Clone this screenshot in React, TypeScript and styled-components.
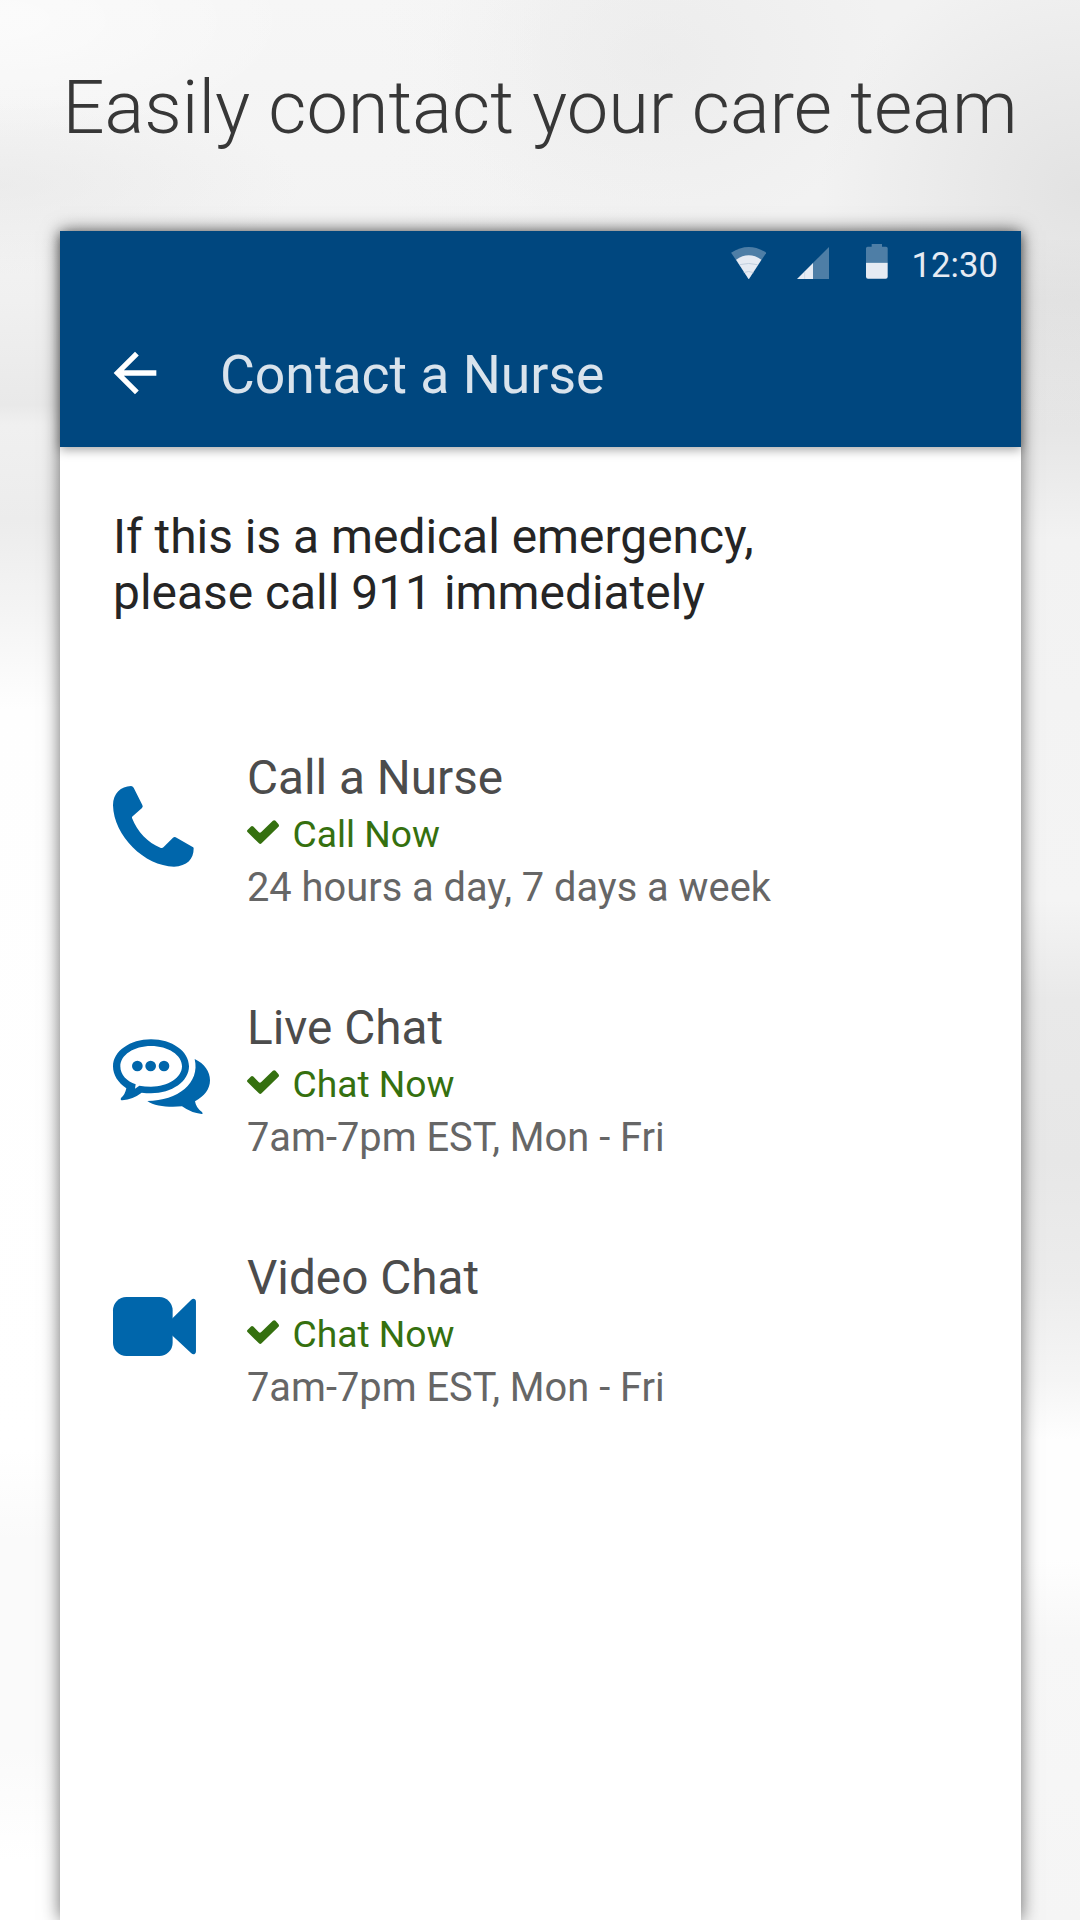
import React from "react";
import styled, { createGlobalStyle } from "styled-components";

const GlobalStyle = createGlobalStyle`
  html, body {
    margin: 0;
    background: #fff;
  }
  *, *::before, *::after {
    box-sizing: border-box;
  }
`;

const Page = styled.main`
  display: flex;
  flex-direction: column;
  align-items: center;
  width: 1080px;
  height: 1920px;
  overflow: hidden;
  font-family: Roboto, "Liberation Sans", sans-serif;
  background:
    radial-gradient(ellipse 260px 240px at 1080px 190px, rgba(205, 205, 205, 0.42), transparent),
    radial-gradient(ellipse 230px 180px at 660px 60px, rgba(226, 226, 226, 0.35), transparent),
    radial-gradient(ellipse 300px 90px at 0 185px, rgba(224, 224, 224, 0.4), transparent),
    radial-gradient(ellipse 300px 120px at 0 20px, rgba(255, 255, 255, 0.6), transparent),
    linear-gradient(90deg, transparent 35%, #f2f2f2 65%) 0 0 / 100% 240px no-repeat,
    linear-gradient(#f6f6f6 0, #f3f3f3 230px, #f0f0f0 300px, #e9e9e9 405px, #f0f0f0 425px, #ececec 520px, #f5f5f5 620px, #fefefe 710px, #fff 1450px, #fafafa 1540px, #fafafa 1750px, #fff 1860px) 0 0 / 540px 100% no-repeat,
    linear-gradient(#f4f4f4 0, #f2f2f2 230px, #e8e8e8 300px, #e6e6e6 430px, #f2f2f2 540px, #f3f3f3 700px, #f4f4f4 900px, #e9e9e9 1000px, #e7e7e7 1160px, #ececec 1280px, #f5f5f5 1380px, #fefefe 1440px, #fefefe 1560px, #f7f7f7 1640px, #f5f5f5 1920px) 540px 0 / 540px 100% no-repeat;
`;

const Headline = styled.h1`
  flex: none;
  height: 231px;
  margin: 0;
  padding-top: 68px;
  font-size: 74px;
  font-weight: 300;
  line-height: 80px;
  white-space: nowrap;
  color: #373737;
`;

const Phone = styled.section`
  flex: 1;
  width: 961px;
  margin-left: 1px;
  background: #fff;
  box-shadow: 0 0 17px rgba(0, 0, 0, 0.58);
`;

const AppBar = styled.header`
  height: 216px;
  background: #00477f;
  box-shadow: 0 3px 10px rgba(0, 0, 0, 0.35);
`;

const StatusBar = styled.div`
  display: flex;
  justify-content: flex-end;
  align-items: flex-end;
  height: 78px;
  padding: 0 23px 30px 0;
  color: #e6ebf3;
`;

const StatusIcon = styled.svg<{ $gap: number }>`
  display: block;
  margin-right: ${(p) => p.$gap}px;
  fill: currentColor;
`;

const Clock = styled.time`
  font-size: 34.7px;
  line-height: 28px;
`;

const Toolbar = styled.div`
  display: flex;
  align-items: center;
  gap: 53px;
  height: 138px;
  padding: 0 43px 11px;
`;

const BackButton = styled.button`
  display: flex;
  padding: 0;
  border: 0;
  background: none;
  color: #fff;
`;

const ScreenTitle = styled.h2`
  margin: 0;
  padding-top: 4px;
  font-size: 53.5px;
  font-weight: 400;
  line-height: 64px;
  color: #d9e3ec;
`;

const Content = styled.div`
  padding: 62px 53px 0;
`;

const Notice = styled.p`
  margin: 0 0 129px;
  font-size: 47.9px;
  line-height: 56px;
  color: #252525;
`;

const Options = styled.ul`
  display: flex;
  flex-direction: column;
  gap: 88px;
  margin: 0;
  padding: 0;
  list-style: none;
`;

const Option = styled.li`
  display: flex;
  height: 162px;
`;

const OptionIcon = styled.div`
  display: flex;
  align-items: center;
  flex: none;
  width: 134px;
  padding-bottom: 9px;
  color: #0066ab;

  svg {
    display: block;
    fill: currentColor;
    overflow: visible;
  }
`;

const OptionName = styled.h3`
  margin: 0;
  font-size: 47.7px;
  font-weight: 400;
  line-height: 56px;
  color: #4c4c4c;
`;

const Availability = styled.div`
  display: flex;
  gap: 13px;
  margin: 5px 0;
  font-size: 37.2px;
  line-height: 46px;
  color: #35700f;

  svg {
    margin-top: 9px;
    fill: currentColor;
  }
`;

const Hours = styled.div`
  font-size: 39.8px;
  line-height: 52px;
  white-space: nowrap;
  color: #666;
`;

const PhoneIcon = () => (
  <svg width="81" height="81" viewBox="0 0 243 243">
    <path d="M54 0C24 1 0 22 0 58C2 150 95 241 183 242C222 241 242 220 242 187Q242 184 239 183L188 154Q184 152 180 155L152 183Q148 187 142 185C105 171 73 137 57 96Q56 93 59 91L87 66Q91 62 88 57L62 5Q59 0 54 0Z" />
  </svg>
);

const ChatIcon = () => (
  <svg width="97" height="75.7" viewBox="0 0 291 227">
    <path
      fillRule="evenodd"
      d="M114 1C177 1 228 37 228 82C228 127 177 163 114 163Q100 163 86 161Q60 181 28 184Q21 184 24 177Q36 168 40 148C15 131 0 108 0 82C0 37 51 1 114 1ZM114 21C63 21 22 48 22 82C22 108 42 127 68 136L66 149L79 140Q95 143 114 143C165 143 207 116 207 82C207 48 165 21 114 21Z"
    />
    <circle cx="73" cy="81" r="16" />
    <circle cx="113" cy="81" r="16" />
    <circle cx="153" cy="81" r="16" />
    <path d="M245 60C275 74 291 98 291 124C291 150 274 172 246 187Q249 207 267 219Q271 225 266 225Q235 222 207 202C170 206 125 202 103 186C195 185 262 132 245 60Z" />
  </svg>
);

const VideoIcon = () => (
  <svg width="83.3" height="59" viewBox="0 0 250 177">
    <rect width="179" height="177" rx="40" />
    <path d="M177 65L235 8Q241 3 246 7Q249 9 249 14V163Q249 168 246 170Q241 174 235 169L177 115Z" />
  </svg>
);

const CheckIcon = () => (
  <svg width="32.5" height="24.5" viewBox="0 0 98 73">
    <path d="M0 33Q0 30 3 28L12 19Q15 16 19 19L35 36Q39 40 43 36L78 2Q82 -1 86 2L95 12Q98 16 95 20L44 70Q40 74 36 70L3 37Q0 35 0 33Z" />
  </svg>
);

const options = [
  { name: "Call a Nurse", action: "Call Now", hours: "24 hours a day, 7 days a week", Icon: PhoneIcon },
  { name: "Live Chat", action: "Chat Now", hours: "7am-7pm EST, Mon - Fri", Icon: ChatIcon },
  { name: "Video Chat", action: "Chat Now", hours: "7am-7pm EST, Mon - Fri", Icon: VideoIcon },
];

export default function App() {
  return (
    <>
      <GlobalStyle />
      <Page>
        <Headline>Easily contact your care team</Headline>
        <Phone>
          <AppBar>
            <StatusBar>
              <StatusIcon $gap={30.5} width="35.5" height="32.3" viewBox="0 0 106 97">
                <path opacity=".34" d="M0 17Q53 -17 106 17L53 97Z" />
                <path d="M15 38Q53 12 91 38L53 97Z" />
                <path d="M26 53Q53 46 79 53M38 77Q53 70 67 77" fill="none" stroke="#b9c9da" strokeWidth="2.5" />
              </StatusIcon>
              <StatusIcon $gap={37} width="32" height="32" viewBox="0 0 96 96">
                <path opacity=".34" d="M96 0V96H47V49Z" />
                <path d="M48 48V96H0Z" />
                <path d="M23 74V96" stroke="#b9c9da" strokeWidth="1.5" />
              </StatusIcon>
              <StatusIcon $gap={24} width="21.7" height="34.7" viewBox="0 0 65 104">
                <path opacity=".34" d="M17 0H48V8H60Q65 8 65 13V56H0V13Q0 8 5 8H17Z" />
                <path d="M0 56H65V98Q65 104 59 104H6Q0 104 0 98Z" />
              </StatusIcon>
              <Clock>12:30</Clock>
            </StatusBar>
            <Toolbar>
              <BackButton aria-label="Back">
                <svg width="64" height="64" viewBox="0 0 24 24" fill="currentColor">
                  <path d="M20 11H7.83l5.59-5.59L12 4l-8 8 8 8 1.41-1.41L7.83 13H20v-2z" />
                </svg>
              </BackButton>
              <ScreenTitle>Contact a Nurse</ScreenTitle>
            </Toolbar>
          </AppBar>
          <Content>
            <Notice>
              If this is a medical emergency,
              <br />
              please call 911 immediately
            </Notice>
            <Options>
              {options.map(({ name, action, hours, Icon }) => (
                <Option key={name}>
                  <OptionIcon>
                    <Icon />
                  </OptionIcon>
                  <div>
                    <OptionName>{name}</OptionName>
                    <Availability>
                      <CheckIcon />
                      {action}
                    </Availability>
                    <Hours>{hours}</Hours>
                  </div>
                </Option>
              ))}
            </Options>
          </Content>
        </Phone>
      </Page>
    </>
  );
}
